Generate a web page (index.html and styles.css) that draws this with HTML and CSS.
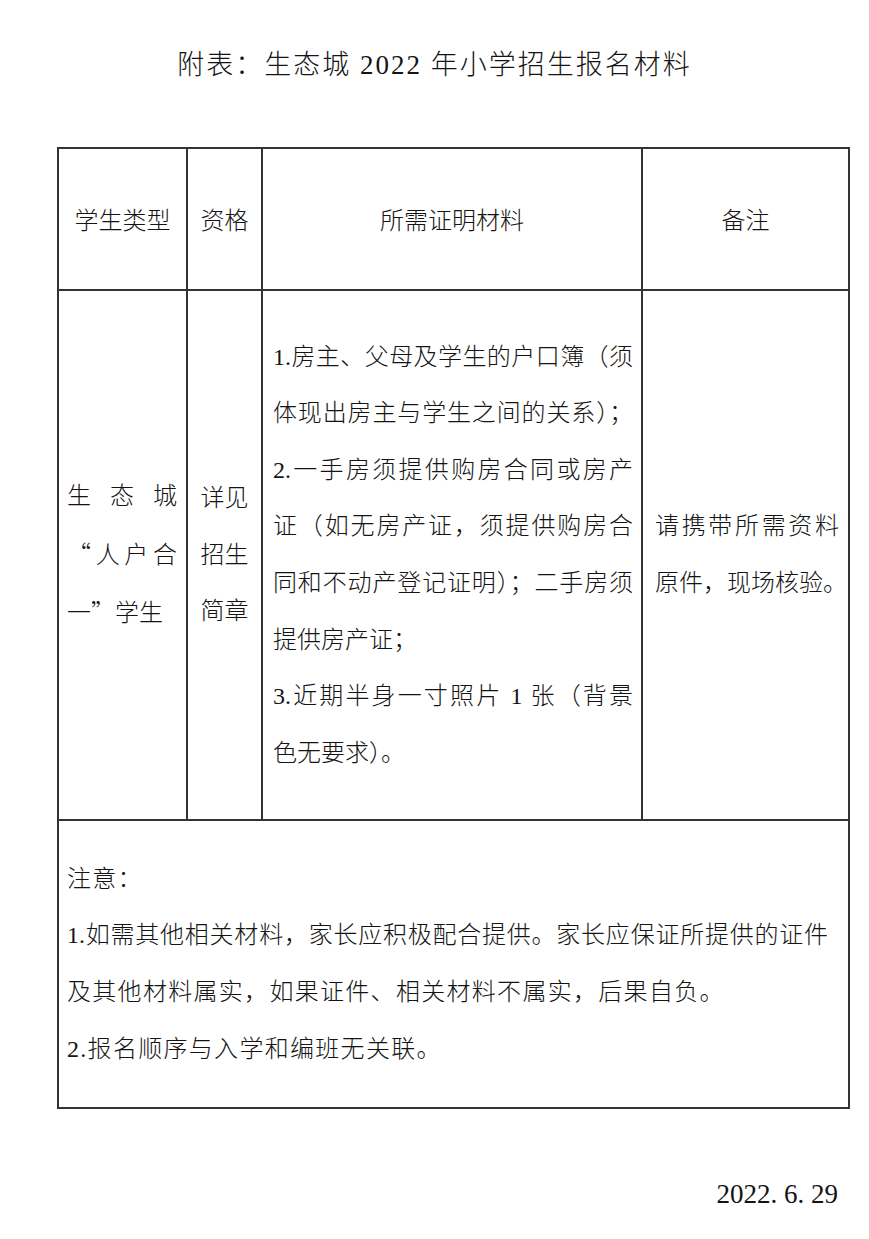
FILE: index.html
```html
<!DOCTYPE html>
<html lang="zh-CN">
<head>
<meta charset="utf-8">
<title>附表：生态城2022年小学招生报名材料</title>
<link rel="stylesheet" href="styles.css">
</head>
<body>
<div class="page">
  <h1 class="title">附表：生态城 2022 年小学招生报名材料</h1>
  <div class="sheet">
    <div class="cell head">学生类型</div>
    <div class="cell head">资格</div>
    <div class="cell head">所需证明材料</div>
    <div class="cell head">备注</div>

    <div class="cell type">
      <div class="lines w110">
        <span class="ln fill">生态城</span>
        <span class="ln fill"><span class="q">“</span>人户合</span>
        <span class="ln">一<span class="q">”</span>学生</span>
      </div>
    </div>
    <div class="cell qual">
      <div class="lines">
        <span class="ln">详见</span>
        <span class="ln">招生</span>
        <span class="ln">简章</span>
      </div>
    </div>
    <div class="cell docs">
      <div class="lines w360">
        <span class="ln fill">1.房主、父母及学生的户口簿（须</span>
        <span class="ln fill">体现出房主与学生之间的关系）；</span>
        <span class="ln fill">2.一手房须提供购房合同或房产</span>
        <span class="ln fill">证（如无房产证，须提供购房合</span>
        <span class="ln fill">同和不动产登记证明）；二手房须</span>
        <span class="ln">提供房产证；</span>
        <span class="ln fill">3.近期半身一寸照片 1 张（背景</span>
        <span class="ln">色无要求）。</span>
      </div>
    </div>
    <div class="cell remark">
      <div class="lines w184">
        <span class="ln fill">请携带所需资料</span>
        <span class="ln nw">原件，现场核验。</span>
      </div>
    </div>

    <div class="cell notes">
      <div class="lines">
        <span class="ln sp">注意：</span>
        <span class="ln fill w761">1.如需其他相关材料，家长应积极配合提供。家长应保证所提供的证件</span>
        <span class="ln sp">及其他材料属实，如果证件、相关材料不属实，后果自负。</span>
        <span class="ln sp">2.报名顺序与入学和编班无关联。</span>
      </div>
    </div>
  </div>
  <div class="date">2022. 6. 29</div>
</div>
</body>
</html>
```
FILE: styles.css
```css
html, body {
  margin: 0;
  padding: 0;
  background: #ffffff;
}

body {
  color: #141414;
  font-family: "Liberation Serif", "Noto Sans CJK SC", serif;
  font-weight: 300;
}

.page {
  width: 869px;
  min-height: 1239px;
}

.title {
  margin: 0;
  padding-top: 45px;
  height: 40px;
  line-height: 40px;
  text-align: center;
  font-size: 27px;
  font-weight: 300;
  letter-spacing: 2px;
}

.sheet {
  box-sizing: border-box;
  width: 793px;
  margin: 62px 0 0 57px;
  padding: 2px;
  display: grid;
  grid-template-columns: 127px 73px 378px 205px;
  grid-template-rows: 140px 528px 286px;
  gap: 2px;
  background: #333333;
}

.cell {
  background: #ffffff;
  display: flex;
  align-items: center;
  font-size: 24px;
  line-height: 56.6px;
}

.head {
  justify-content: center;
  padding-top: 5px;
  box-sizing: border-box;
}

.type {
  padding-left: 8px;
}

.qual {
  justify-content: center;
  text-align: center;
}

.docs {
  padding-left: 10px;
}

.remark {
  padding-left: 12px;
}

.notes {
  grid-column: 1 / -1;
  padding-left: 8px;
}

.lines {
  display: flex;
  flex-direction: column;
}

.w110 { width: 110px; }
.w360 { width: 360px; }
.w184 { width: 184px; }

.ln {
  display: block;
}

.fill {
  text-align: justify;
  text-align-last: justify;
}

.nw {
  white-space: nowrap;
}

.w761 {
  width: 761px;
}

.sp {
  letter-spacing: 1.3px;
  white-space: nowrap;
}

.q {
  font-family: "Noto Sans CJK SC", sans-serif;
  font-feature-settings: "fwid" 1;
}

.date {
  margin-top: 65px;
  height: 40px;
  line-height: 40px;
  text-align: right;
  padding-right: 31px;
  font-size: 27px;
}
```
